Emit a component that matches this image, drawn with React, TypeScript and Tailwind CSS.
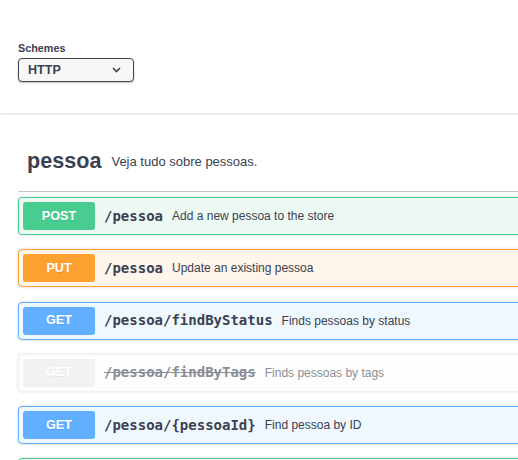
import React from 'react';

type Op = {
    method: string;
    path: string;
    summary: string;
    deprecated?: boolean;
};

const ops: Op[] = [
    { method: 'POST', path: '/pessoa', summary: 'Add a new pessoa to the store' },
    { method: 'PUT', path: '/pessoa', summary: 'Update an existing pessoa' },
    { method: 'GET', path: '/pessoa/findByStatus', summary: 'Finds pessoas by status' },
    { method: 'GET', path: '/pessoa/findByTags', summary: 'Finds pessoas by tags', deprecated: true },
    { method: 'GET', path: '/pessoa/{pessoaId}', summary: 'Find pessoa by ID' },
];

const styles: Record<string, { block: string; badge: string }> = {
    POST: { block: 'border-[#49cc90] bg-[#edfaf4]', badge: 'bg-[#49cc90]' },
    PUT: { block: 'border-[#fca130] bg-[#fff5ea]', badge: 'bg-[#fca130]' },
    GET: { block: 'border-[#61affe] bg-[#eff7ff]', badge: 'bg-[#61affe]' },
    DEPRECATED: { block: 'border-[#ebebeb] bg-[#fdfdfd] opacity-60', badge: 'bg-[#ebebeb]' },
};

const OpBlock: React.FC<{ op: Op }> = ({ op }) => {
    const s = op.deprecated ? styles.DEPRECATED : styles[op.method];
    return (
        <div className={`mb-[14.25px] flex h-[38px] items-center rounded-[4px] border px-[4px] shadow-[0_0_3px_rgba(0,0,0,0.19)] ${s.block}`}>
            <div className={`flex h-[28px] w-[72px] shrink-0 items-center justify-center rounded-[3px] text-[12.6px] font-bold text-white [text-shadow:0_1px_0_rgba(0,0,0,0.1)] ${s.badge}`}>
                {op.method}
            </div>
            <span className={`pl-[9px] pr-[9px] font-['DejaVu_Sans_Mono',monospace] text-[14px] font-bold text-[#3b4151] ${op.deprecated ? 'line-through' : ''}`}>
                {op.path}
            </span>
            <span className="text-[12px] text-[#3b4151]">{op.summary}</span>
        </div>
    );
};

export default function App() {
    return (
        <div className="h-[460px] w-[518px] overflow-hidden bg-white font-['Liberation_Sans',Arial,sans-serif] text-[#3b4151]">
            <div className="w-[700px] pb-[31px] pl-[18px] pt-[42px] shadow-[0_1px_2px_0_rgba(0,0,0,0.15)]">
                <div className="text-[10.8px] font-bold leading-[13px]">Schemes</div>
                <div className="mt-[3px] flex h-[24px] w-[116px] items-center justify-between rounded-[4px] border-[1.5px] border-[#41444e] bg-[#f7f7f7] pl-[9px] pr-[12px] shadow-[0_1px_2px_0_rgba(0,0,0,0.25)]">
                    <span className="text-[12.6px] font-bold">HTTP</span>
                    <svg width="9" height="6" viewBox="0 0 9 6" fill="none">
                        <path d="M1 1l3.5 3.5L8 1" stroke="#3b4151" strokeWidth="1.6" />
                    </svg>
                </div>
            </div>

            <div className="w-[700px] px-[18px]">
                <div className="mt-[19px] flex h-[60px] items-center border-b border-[#c4c6cb] pl-[9px]">
                    <h4 className="text-[21.6px] font-bold">pessoa</h4>
                    <span className="pl-[10px] text-[13px]">Veja tudo sobre pessoas.</span>
                </div>
                <div className="mt-[5px]">
                    {ops.map((op, i) => (
                        <OpBlock key={i} op={op} />
                    ))}
                    {/* next operation, only its top edge is in view */}
                    <div className="h-[38px] rounded-[4px] border border-[#49cc90] bg-[#edfaf4] shadow-[0_0_3px_rgba(0,0,0,0.19)]" />
                </div>
            </div>
        </div>
    );
}
